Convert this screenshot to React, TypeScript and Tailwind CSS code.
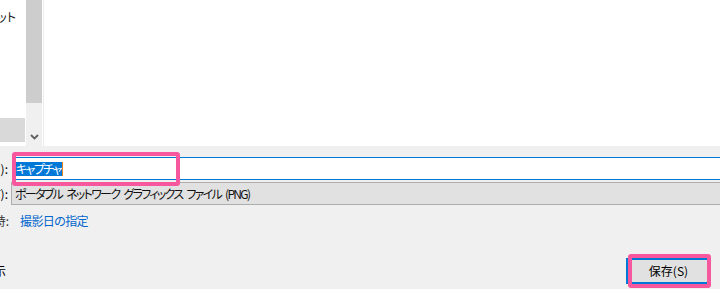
export default function App() {
  const font = "font-['Noto_Sans_CJK_JP','Noto_Sans',sans-serif] [font-feature-settings:'palt']";
  return (
    <div className={`w-[720px] h-[289px] overflow-hidden bg-[#f0f0f0] flex flex-col text-[12px] text-black ${font}`}>
      {/* Folder tree + file list */}
      <div className="flex h-[146px] shrink-0">
        <div className="w-[26px] bg-white flex flex-col">
          <div className="h-[20px] mt-[7px] w-[26px] pr-[10px] flex justify-end items-center overflow-hidden whitespace-nowrap text-[#1a1a1a]">
            スクリーンショット
          </div>
          <div className="mt-[91px] h-[24px] w-[25px] bg-[#d9d9d9]" />
        </div>
        <div className="w-[16px] flex flex-col bg-[#f0f0f0]">
          <div className="h-[103px] bg-[#cdcdcd]" />
          <div className="flex-1 flex items-end justify-center pb-[6px]">
            <svg width="9" height="6" viewBox="0 0 9 6">
              <path d="M1 1 L4.5 4.5 L8 1" fill="none" stroke="#606060" strokeWidth="1.8" />
            </svg>
          </div>
        </div>
        <div className="w-[1px] bg-white" />
        <div className="w-[1px] bg-[#ececec]" />
        <div className="flex-1 bg-white" />
      </div>

      {/* File name */}
      <div className="relative flex items-center h-[23px] mt-[11px]">
        <div className="w-[12px] pr-[4px] flex justify-end overflow-hidden whitespace-nowrap">ファイル名(N):</div>
        <div className="flex-1 h-[23px] border-y border-[#0078d7] bg-white flex items-center pl-[4px]">
          <span className="bg-[#0078d7] text-white leading-[14px] h-[14px] whitespace-nowrap tracking-[-1.6px] pr-[1px]">キャプチャ</span>
          <span className="w-[1px] h-[14px] bg-[#e8821e]" />
        </div>
        <div className="absolute left-[12px] top-[-5px] w-[168px] h-[34px] border-4 border-[#f7579c] rounded-[3px]" />
      </div>

      {/* File type */}
      <div className="flex items-center h-[23px] mt-[2px]">
        <div className="w-[11px] pr-[3px] flex justify-end overflow-hidden whitespace-nowrap">ファイルの種類(T):</div>
        <div className="flex-1 h-[23px] border border-[#adadad] border-r-0 bg-[#e1e1e1] flex items-center pl-[3px] whitespace-nowrap tracking-[-1.7px] [word-spacing:3px] text-[#111]">
          ポータブル ネットワーク グラフィックス ファイル (PNG)
        </div>
      </div>

      {/* Date taken */}
      <div className="flex items-center h-[18px] mt-[7px]">
        <div className="w-[12px] pr-[3px] flex justify-end overflow-hidden whitespace-nowrap text-[#333]">撮影日時:</div>
        <span className="ml-[8px] text-[#0066cc] whitespace-nowrap tracking-[-0.6px]">撮影日の指定</span>
      </div>

      {/* Footer */}
      <div className="flex items-center justify-between h-[26px] mt-[28px]">
        <div className="w-[6px] flex justify-end overflow-hidden whitespace-nowrap">フォルダーの非表示</div>
        <div className="relative mr-[9px]">
          <button className="w-[85px] h-[26px] border-2 border-[#0078d7] bg-[#e1e1e1] flex items-center justify-center text-[12px]">
            保存(S)
          </button>
          <div className="absolute left-[2px] top-[-4px] w-[83px] h-[34px] border-4 border-[#f7579c] rounded-[3px]" />
        </div>
      </div>
    </div>
  );
}
